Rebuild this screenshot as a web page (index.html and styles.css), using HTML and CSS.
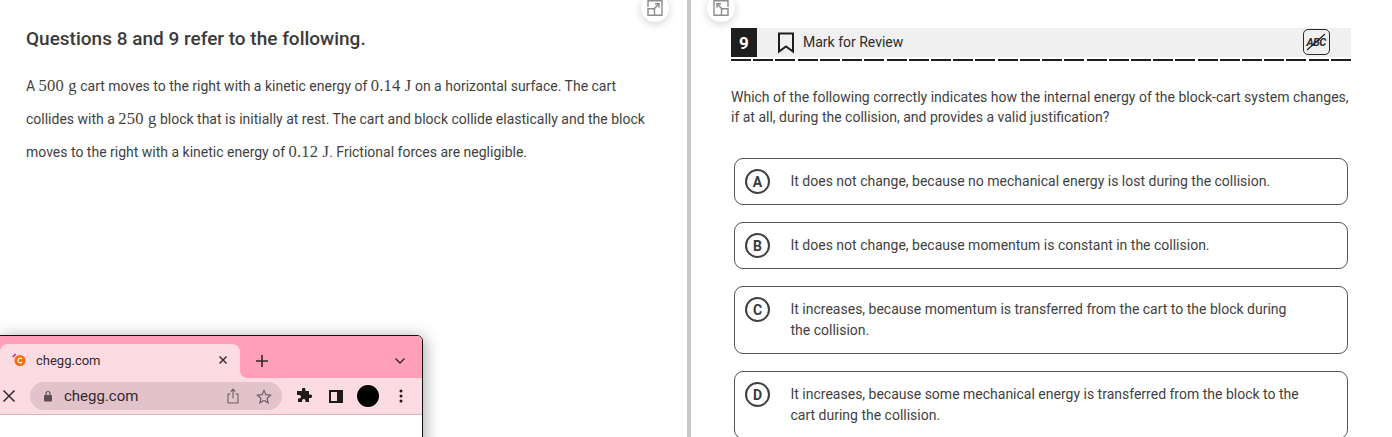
FILE: index.html
```html
<!DOCTYPE html>
<html lang="en">
<head>
<meta charset="utf-8">
<title>Question 9</title>
<link rel="stylesheet" href="styles.css">
</head>
<body>
<main class="page">
  <section class="left">
    <h1 class="title">Questions 8 and 9 refer to the following.</h1>
    <p class="passage">A <span class="m">500 g</span> cart moves to the right with a kinetic energy of <span class="m">0.14 J</span> on a horizontal surface. The cart collides with a <span class="m">250 g</span> block that is initially at rest. The cart and block collide elastically and the block moves to the right with a kinetic energy of <span class="m">0.12 J</span>. Frictional forces are negligible.</p>
    <button class="round round-left" aria-label="Expand">
      <svg width="16" height="16" viewBox="0 0 16 16" fill="none" stroke="#8c8c8c" stroke-width="1.4"><path d="M1 7V.7h14v14.600H8"/><path d="M1 8.700h6.500v6.600H1z"/><path d="M6.500 9.500L12 3.800M8 3.800h4v4"/></svg>
    </button>
  </section>
  <div class="divider"></div>
  <section class="right">
    <button class="round round-right" aria-label="Collapse">
      <svg width="16" height="16" viewBox="0 0 16 16" fill="none" stroke="#8c8c8c" stroke-width="1.4"><path d="M8 15.300H1V.7h14V7"/><path d="M8.500 8.700H15v6.600H8.500z"/><path d="M9.500 9.500L4 3.800M8 3.800H4v4"/></svg>
    </button>
    <header class="qbar">
      <span class="qnum">9</span>
      <svg class="flag" width="18" height="22" viewBox="0 0 18 22" fill="none" stroke="#1e1e1e" stroke-width="2"><path d="M2 1.500h14v18l-7-5-7 5z"/></svg>
      <span class="mark">Mark for Review</span>
      <span class="abc"><span class="abc-t">ABC</span><svg class="abc-slash" width="25" height="24" viewBox="0 0 25 24"><path d="M3 20L21 4" stroke="#1e1e1e" stroke-width="1.200"/></svg></span>
    </header>
    <div class="dash"></div>
    <p class="question">Which of the following correctly indicates how the internal energy of the block-cart system changes, if at all, during the collision, and provides a valid justification?</p>
    <div class="options">
      <div class="opt"><span class="letter">A</span><span class="otext">It does not change, because no mechanical energy is lost during the collision.</span></div>
      <div class="opt"><span class="letter">B</span><span class="otext">It does not change, because momentum is constant in the collision.</span></div>
      <div class="opt"><span class="letter">C</span><span class="otext">It increases, because momentum is transferred from the cart to the block during the collision.</span></div>
      <div class="opt"><span class="letter">D</span><span class="otext">It increases, because some mechanical energy is transferred from the block to the cart during the collision.</span></div>
    </div>
  </section>
</main>

<aside class="browser">
  <div class="strip">
    <div class="tab">
      <svg class="fav" width="14" height="14" viewBox="0 0 14 14"><circle cx="8" cy="7.500" r="5.500" fill="#f36c0e"/><path d="M10 6A2.300 2.300 0 1 0 10 9" fill="none" stroke="#fff" stroke-width="1.200"/><path d="M.7 4L3.700 1" stroke="#e8186c" stroke-width="1.500"/></svg>
      <span class="tab-t">chegg.com</span>
      <svg class="tab-x" width="10" height="10" viewBox="0 0 10 10" stroke="#33292c" stroke-width="1.400"><path d="M1.500 1.500l7 7M8.500 1.500l-7 7"/></svg>
    </div>
    <svg class="plus" width="14" height="14" viewBox="0 0 14 14" stroke="#33292c" stroke-width="1.600"><path d="M7 1v12M1 7h12"/></svg>
    <svg class="chev" width="12" height="8" viewBox="0 0 12 8" fill="none" stroke="#33292c" stroke-width="1.400"><path d="M1.500 1.500L6 6l4.500-4.500"/></svg>
  </div>
  <div class="toolbar">
    <svg class="stop" width="14" height="14" viewBox="0 0 14 14" stroke="#33292c" stroke-width="1.500"><path d="M1.500 1.500l11 11M12.500 1.500l-11 11"/></svg>
    <div class="pill">
      <svg width="10" height="12" viewBox="0 0 10 12"><rect x="1" y="5" width="8" height="6.500" rx="1" fill="#5b4f53"/><path d="M3 5.500V3.500a2 2 0 0 1 4 0v2" fill="none" stroke="#5b4f53" stroke-width="1.200"/></svg>
      <span class="url">chegg.com</span>
      <svg class="share" width="14" height="16" viewBox="0 0 14 16" fill="none" stroke="#6b6165" stroke-width="1.100"><path d="M4.500 6H2v9h10V6H9.500M7 10.500V1.500M4.800 3.500L7 1.300l2.200 2.200"/></svg>
      <svg class="star" width="16" height="15" viewBox="0 0 16 15" fill="none" stroke="#6b6165" stroke-width="1.200"><path d="M8 1.500l1.900 4.200 4.600.5-3.400 3 1 4.500L8 11.400l-4.100 2.300 1-4.500-3.400-3 4.600-.5z"/></svg>
    </div>
    <svg class="puzzle" width="16" height="16" viewBox="0 0 16 16" fill="#20191b"><path d="M6 1.500a1.700 1.700 0 0 1 3.400 0V3h3.600v3.400h1.300a1.800 1.800 0 0 1 0 3.600H13v4H9.500v-1.300a1.700 1.700 0 0 0-3.400 0V14H2v-3.500h1.200a1.800 1.800 0 0 0 0-3.600H1V3h5z"/></svg>
    <svg class="panel" width="14" height="13" viewBox="0 0 14 13"><rect x="1" y="1" width="12" height="11" fill="none" stroke="#20191b" stroke-width="2"/><rect x="8" y="1" width="5" height="11" fill="#20191b"/></svg>
    <span class="avatar"></span>
    <svg class="dots" width="4" height="14" viewBox="0 0 4 14" fill="#20191b"><circle cx="2" cy="2" r="1.500"/><circle cx="2" cy="7" r="1.500"/><circle cx="2" cy="12" r="1.500"/></svg>
  </div>
</aside>
</body>
</html>
```
FILE: styles.css
```css
* { box-sizing: border-box; }
html, body { margin: 0; height: 100%; overflow: hidden; background: #fff; }
body { font-family: Roboto, "Liberation Sans", sans-serif; color: #3b3b3b; position: relative; }
.page { display: flex; height: 437px; overflow: hidden; }
.left { width: 687px; flex: none; padding: 27px 26px 0; position: relative; }
.title { margin: 0; font-size: 19px; line-height: 23px; font-weight: 500; color: #3a3a3a; }
.passage { margin: 20px 0 0; width: 630px; font-size: 14px; line-height: 33px; color: #3f3f3f; }
.m { font-family: "Liberation Serif", serif; font-size: 16.500px; line-height: 1; letter-spacing: .2px; }
.divider { width: 4px; flex: none; background: #c8c8c8; }
.right { flex: 1; position: relative; padding: 28px 41px 0 40px; }
.round { position: absolute; top: -6px; width: 28px; height: 28px; padding: 0; border: 0; border-radius: 50%; background: #fff; box-shadow: 0 2px 8px rgba(0,0,0,.18); display: flex; align-items: center; justify-content: center; }
.round-left { right: 18px; }
.round-right { left: 16px; }
.qbar { height: 29px; background: #f0f0f0; display: flex; align-items: center; }
.qnum { width: 26px; height: 29px; background: #1e1e1e; color: #fff; font-weight: 700; font-size: 17px; display: flex; align-items: center; justify-content: center; }
.flag { margin-left: 20px; }
.mark { margin-left: 8px; margin-bottom: 2px; font-size: 14px; color: #2c2c2c; }
.abc { margin-left: auto; margin-right: 21.500px; position: relative; width: 27px; height: 26px; margin-bottom: 1px; border: 1px solid #2a2a2a; border-radius: 5px; display: flex; align-items: center; justify-content: center; }
.abc-t { font-size: 11px; font-weight: 700; font-style: italic; color: #2a2a2a; letter-spacing: -.6px; }
.abc-slash { position: absolute; left: 0; top: 0; }
.dash { height: 2px; margin-top: 2px; background: repeating-linear-gradient(90deg, #1e1e1e 0 20px, transparent 20px 22.220px); }
.question { margin: 26px 0 0; font-size: 14px; line-height: 20px; color: #3f3f3f; }
.options { margin: 31px 3px 0 3px; display: flex; flex-direction: column; gap: 17px; }
.opt { display: flex; align-items: flex-start; padding: 12px 12px 12px 10px; border: 1px solid #555; border-radius: 9px; }
.letter { flex: none; width: 25px; height: 25px; border: 2px solid #3f3f3f; border-radius: 50%; font-size: 14px; font-weight: 700; color: #3a3a3a; display: flex; align-items: center; justify-content: center; margin: -2px 0; }
.otext { margin-left: 20.500px; width: 510px; font-size: 14px; line-height: 21px; color: #3f3f3f; }
.browser { position: absolute; left: -1px; top: 335px; width: 424px; height: 120px; border: 1px solid #111; border-top-right-radius: 6px; background: #fff; box-shadow: 2px 2px 16px rgba(0,0,0,.35); overflow: hidden; }
.strip { height: 42px; padding-top: 8px; background: #ffa0b8; display: flex; align-items: center; }
.tab { position: relative; width: 240px; height: 34px; background: #fddbe3; border-radius: 8px 8px 0 0; display: flex; align-items: center; padding: 0 12px 2px 12px; font-size: 13px; color: #33292c; }
.tab::after { content: ""; position: absolute; right: -8px; bottom: 0; width: 8px; height: 8px; background: radial-gradient(circle at 100% 0, transparent 8px, #fddbe3 8px); }
.tab-t { margin-left: 10px; }
.tab-x { margin-left: auto; }
.plus { margin-left: 15px; }
.chev { margin-left: auto; margin-right: 16px; }
.toolbar { height: 37px; background: #fddbe3; border-bottom: 1px solid #d9b6bf; display: flex; align-items: center; }
.stop { margin-left: 2px; }
.pill { margin-left: 14px; width: 252px; height: 28px; border-radius: 14px; background: #e3c3cb; display: flex; align-items: center; padding-left: 13px; }
.url { margin-left: 11px; font-size: 15px; color: #33292c; }
.share { margin-left: 88px; }
.star { margin-left: 16px; }
.puzzle { margin-left: 14px; }
.panel { margin-left: 17px; }
.avatar { margin-left: 14px; width: 22px; height: 22px; border-radius: 50%; background: #000; }
.dots { margin-left: 20px; }
```
